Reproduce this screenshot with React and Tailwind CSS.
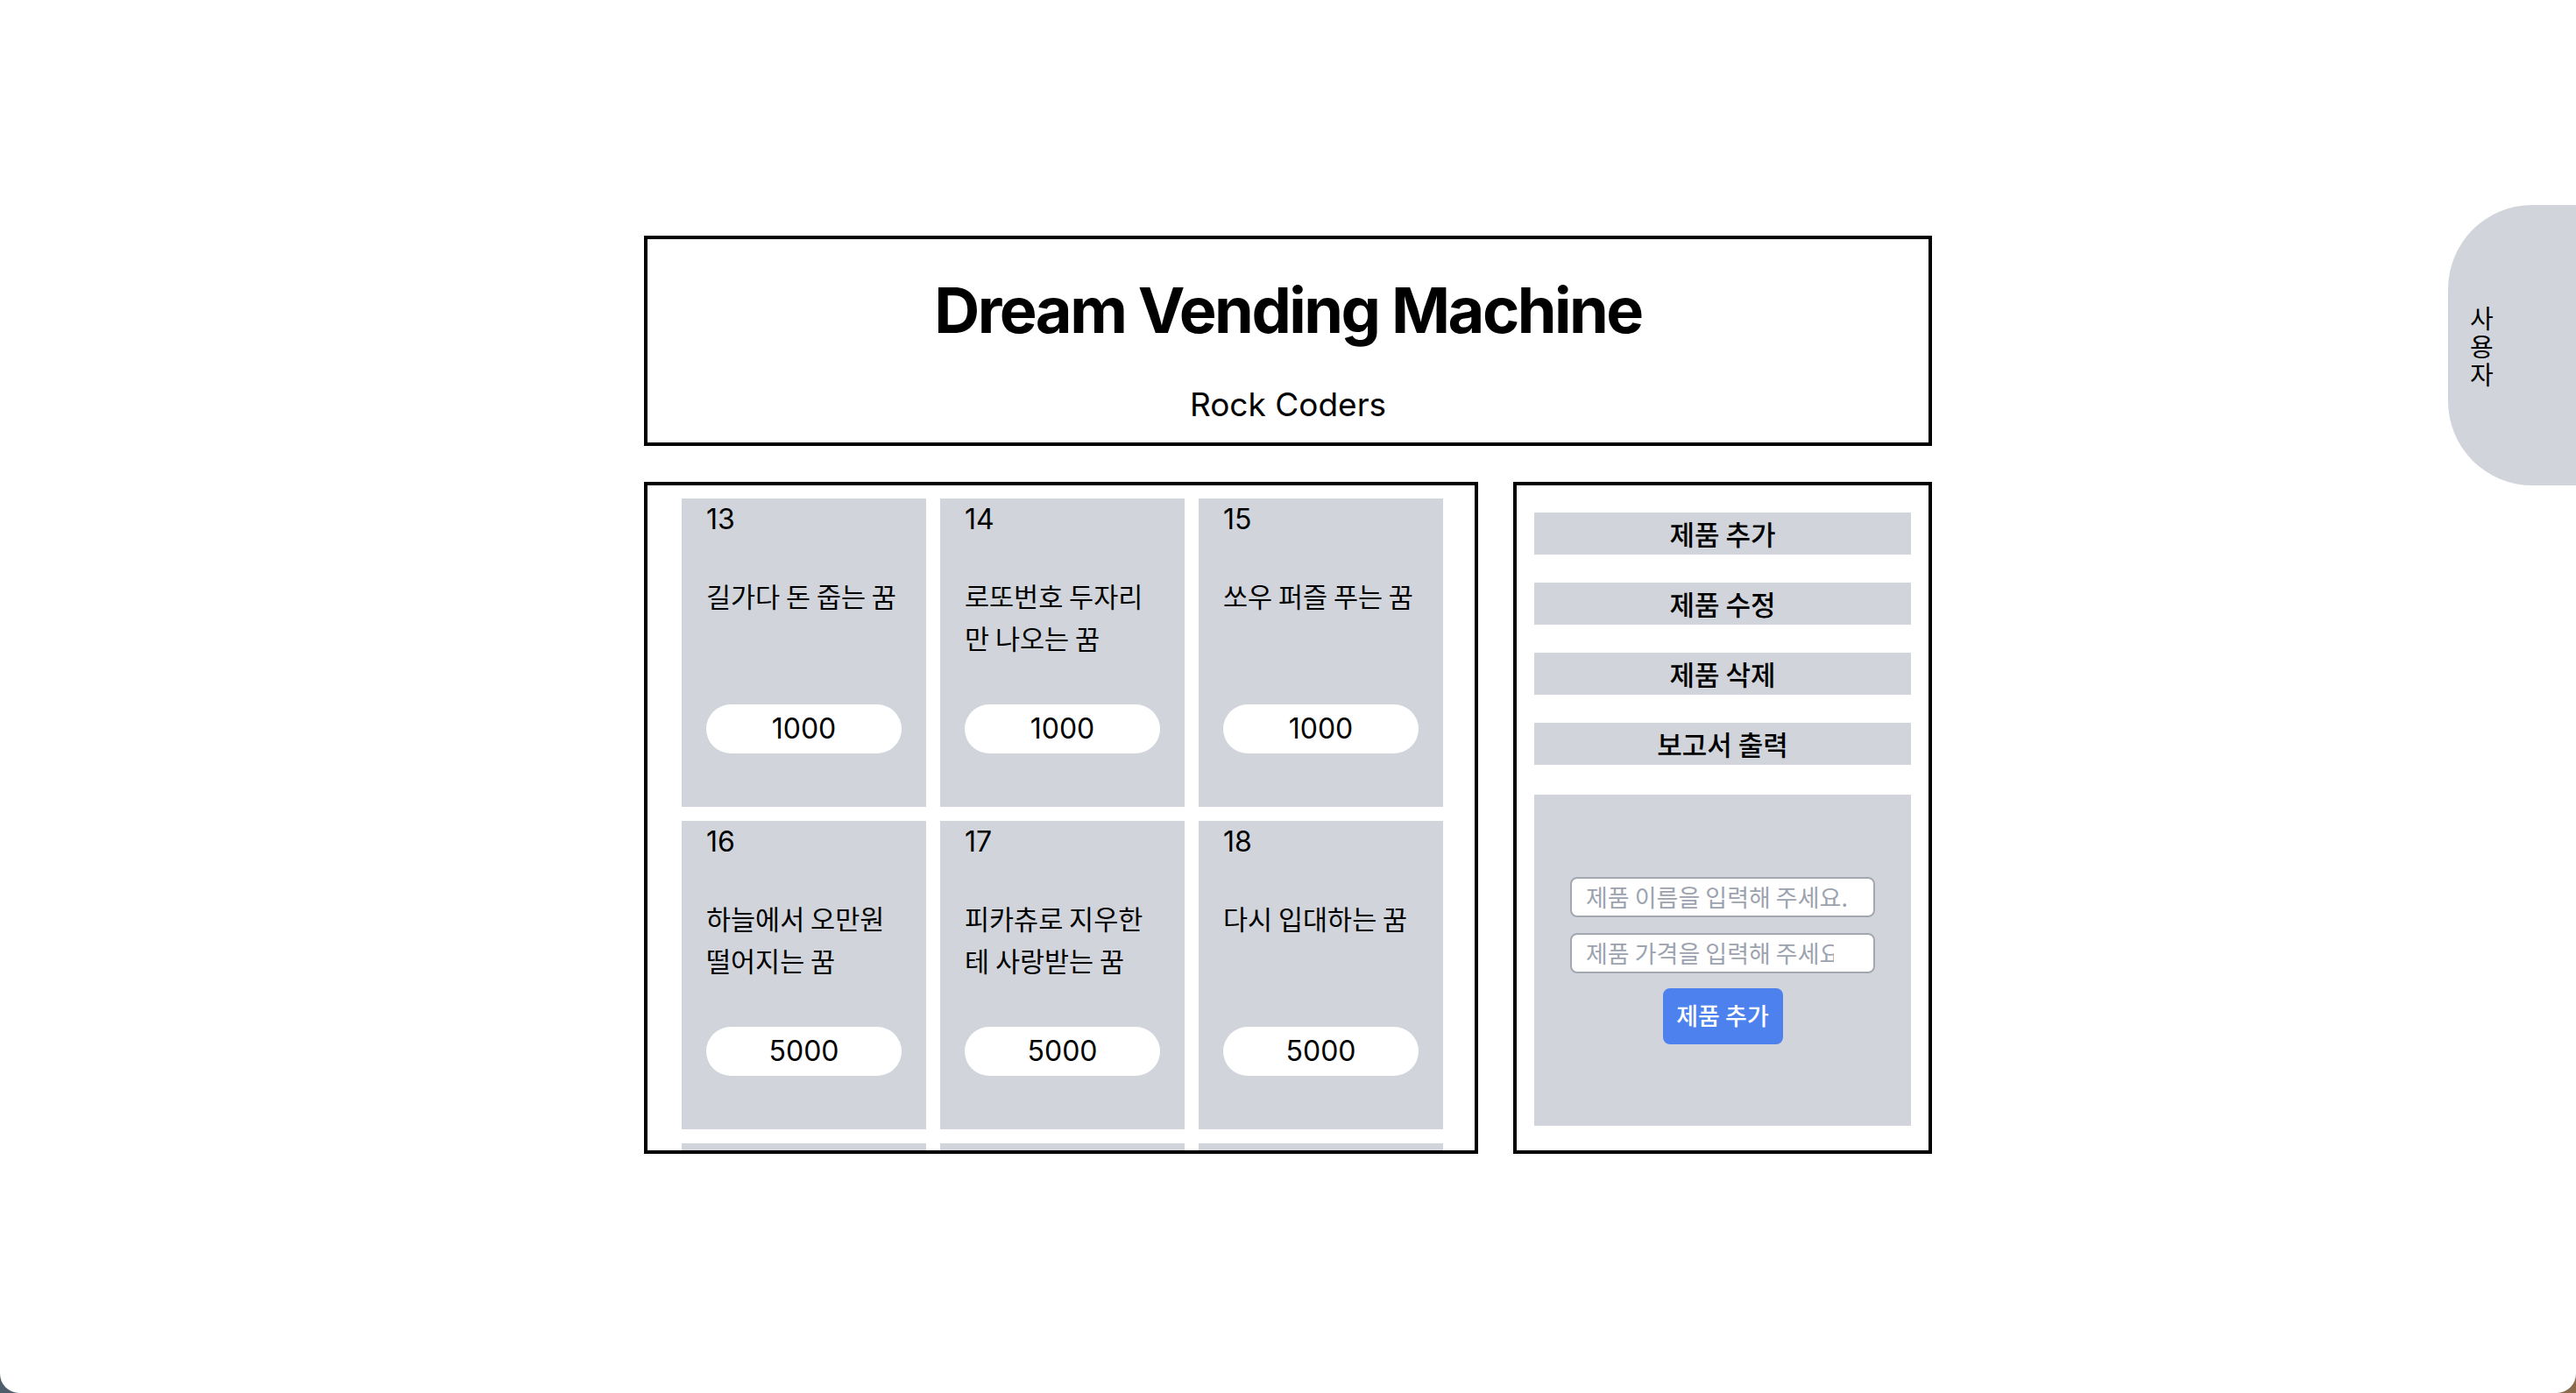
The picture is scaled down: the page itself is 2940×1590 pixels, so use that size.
import React from "react";

const products = [
  { id: 13, name: "길가다 돈 줍는 꿈", price: 1000 },
  { id: 14, name: "로또번호 두자리만 나오는 꿈", price: 1000 },
  { id: 15, name: "쏘우 퍼즐 푸는 꿈", price: 1000 },
  { id: 16, name: "하늘에서 오만원 떨어지는 꿈", price: 5000 },
  { id: 17, name: "피카츄로 지우한테 사랑받는 꿈", price: 5000 },
  { id: 18, name: "다시 입대하는 꿈", price: 5000 },
  { id: 19, name: "시험 백점 맞는 꿈", price: 3000 },
  { id: 20, name: "하늘을 나는 꿈", price: 3000 },
  { id: 21, name: "용 잡는 꿈", price: 3000 },
];

const latin = { fontFamily: "Inter, 'Noto Sans CJK KR', sans-serif" };
const kr = { fontFamily: "'Noto Sans CJK KR', Inter, sans-serif" };

function Card({ p }) {
  return (
    <div className="bg-[#d1d5db] h-[352px] px-[28px] flex flex-col text-black">
      <div className="text-[32px] leading-[48px]" style={latin}>{p.id}</div>
      <div className="mt-[39px] h-[96px] text-[30.5px] leading-[48px] break-all" style={kr}>{p.name}</div>
      <div className="mt-[52px] h-[56px] rounded-full bg-white flex items-center justify-center text-[32px]" style={latin}>
        {p.price}
      </div>
    </div>
  );
}

export default function App() {
  return (
    <div className="h-[1590px] overflow-hidden bg-gradient-to-r from-[#4d5d6b] to-[#8a6b4c]">
      <div className="relative h-[1590px] bg-white rounded-b-[22px] overflow-hidden">
        <div className="w-[1470px] mx-auto pt-[269px]">
          <header className="h-[240px] border-4 border-black flex flex-col items-center">
            <h1 className="mt-[37px] text-[72px] leading-[88px] font-bold tracking-[-0.035em] text-black" style={latin}>
              Dream Vending Machine
            </h1>
            <p className="mt-[39px] text-[37px] leading-[50px] text-black" style={latin}>Rock Coders</p>
          </header>

          <div className="mt-[41px] grid grid-cols-[952px_478px] gap-[40px]">
            <section className="h-[767px] border-4 border-black overflow-hidden">
              <div className="pl-[39px] pt-[15px] grid grid-cols-[repeat(3,279px)] gap-[16px]">
                {products.map((p) => (
                  <Card key={p.id} p={p} />
                ))}
              </div>
            </section>

            <section className="h-[767px] border-4 border-black px-[20px] pt-[31px] flex flex-col" style={kr}>
              {["제품 추가", "제품 수정", "제품 삭제", "보고서 출력"].map((t, i) => (
                <div
                  key={t}
                  className={`h-[48px] bg-[#d1d5db] flex items-center justify-center text-[31px] font-medium text-black ${i > 0 ? "mt-[32px]" : ""}`}
                >
                  {t}
                </div>
              ))}
              <div className="mt-[34px] h-[378px] bg-[#d1d5db] flex flex-col items-center justify-center">
                <input
                  className="w-[348px] h-[46px] bg-white border-2 border-[#a3a8b0] rounded-[8px] pl-[16px] pr-[10px] text-[27px] placeholder:text-[#9ca3af] outline-none"
                  style={kr}
                  placeholder="제품 이름을 입력해 주세요."
                />
                <input
                  className="mt-[18px] w-[348px] h-[46px] bg-white border-2 border-[#a3a8b0] rounded-[8px] pl-[16px] pr-[45px] text-[27px] placeholder:text-[#9ca3af] outline-none"
                  style={kr}
                  placeholder="제품 가격을 입력해 주세요"
                />
                <button className="mt-[17px] w-[137px] h-[64px] rounded-[8px] bg-[#4d82ee] text-white text-[27px] font-medium" style={kr}>
                  제품 추가
                </button>
              </div>
            </section>
          </div>
        </div>

        <div className="absolute right-0 top-[234px] w-[146px] h-[320px] rounded-l-[96px] bg-[#d1d5db] flex items-center pl-[25px]">
          <span className="w-[30px] text-[29px] leading-[32px] break-all text-black" style={kr}>사용자</span>
        </div>
      </div>
    </div>
  );
}
